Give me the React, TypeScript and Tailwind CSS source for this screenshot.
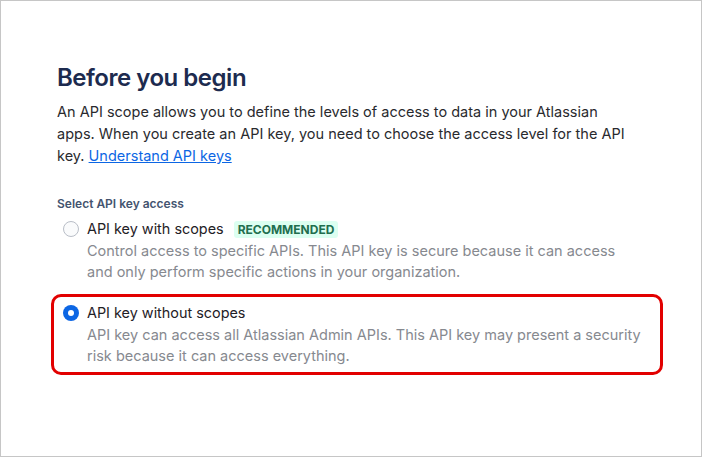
import { useState } from 'react';

const options = [
  {
    id: 'scoped',
    label: 'API key with scopes',
    badge: 'RECOMMENDED',
    description:
      'Control access to specific APIs. This API key is secure because it can access and only perform specific actions in your organization.',
  },
  {
    id: 'unscoped',
    label: 'API key without scopes',
    description:
      'API key can access all Atlassian Admin APIs. This API key may present a security risk because it can access everything.',
  },
];

function Radio({ checked }: { checked: boolean }) {
  if (checked) {
    return (
      <span className="mt-[2px] flex h-4 w-4 shrink-0 items-center justify-center rounded-full bg-[#0c66e4]">
        <span className="h-[6px] w-[6px] rounded-full bg-white" />
      </span>
    );
  }
  return <span className="mt-[2px] h-4 w-4 shrink-0 rounded-full border border-[#b9bec7] bg-[#fafbfc]" />;
}

export default function App() {
  const [selected, setSelected] = useState('unscoped');

  return (
    <div
      className="h-[457px] w-[702px] border border-[#c6c6c6] bg-white text-[#172b4d]"
      style={{ fontFamily: 'Inter, "Noto Sans", sans-serif' }}
    >
      <div className="w-[662px] pl-[50px] pt-[61px]">
        {/* Header */}
        <div className="pl-[6px]">
          <h1 className="text-[24px] font-semibold leading-[32px] tracking-[-0.02em] text-[#1d2b4f]">
            Before you begin
          </h1>
          <p className="mt-[7px] w-[575px] text-[14.5px] leading-[22px] text-[#292a2e]">
            An API scope allows you to define the levels of access to data in your Atlassian apps. When you create an
            API key, you need to choose the access level for the API key.{' '}
            <a href="#" className="text-[#0c66e4] underline">
              Understand API keys
            </a>
          </p>
          <div className="mt-[29px] text-[12px] font-semibold leading-[16px] text-[#44546f]">Select API key access</div>
        </div>

        {/* Options */}
        <div className="mt-[-2px] flex flex-col gap-[3px]">
          {options.map((opt) => {
            const isSelected = selected === opt.id;
            return (
              <div
                key={opt.id}
                onClick={() => setSelected(opt.id)}
                className={`flex cursor-pointer gap-[8px] rounded-[10px] border-[3px] py-[6px] pl-[9px] pr-[17px] ${
                  isSelected ? 'border-[#e20000]' : 'border-transparent'
                }`}
              >
                <Radio checked={isSelected} />
                <div className="flex-1">
                  <div className="flex items-center gap-[10px] text-[14.4px] leading-[20px] text-[#1f2126]">
                    <span>{opt.label}</span>
                    {opt.badge && (
                      <span className="rounded-[3px] bg-[#dcfff1] px-[4px] text-[12px] font-bold leading-[17px] text-[#216e4e]">
                        {opt.badge}
                      </span>
                    )}
                  </div>
                  <p className="mt-[1px] text-[14.5px] leading-[21px] text-[#86898f]">{opt.description}</p>
                </div>
              </div>
            );
          })}
        </div>
      </div>
    </div>
  );
}
